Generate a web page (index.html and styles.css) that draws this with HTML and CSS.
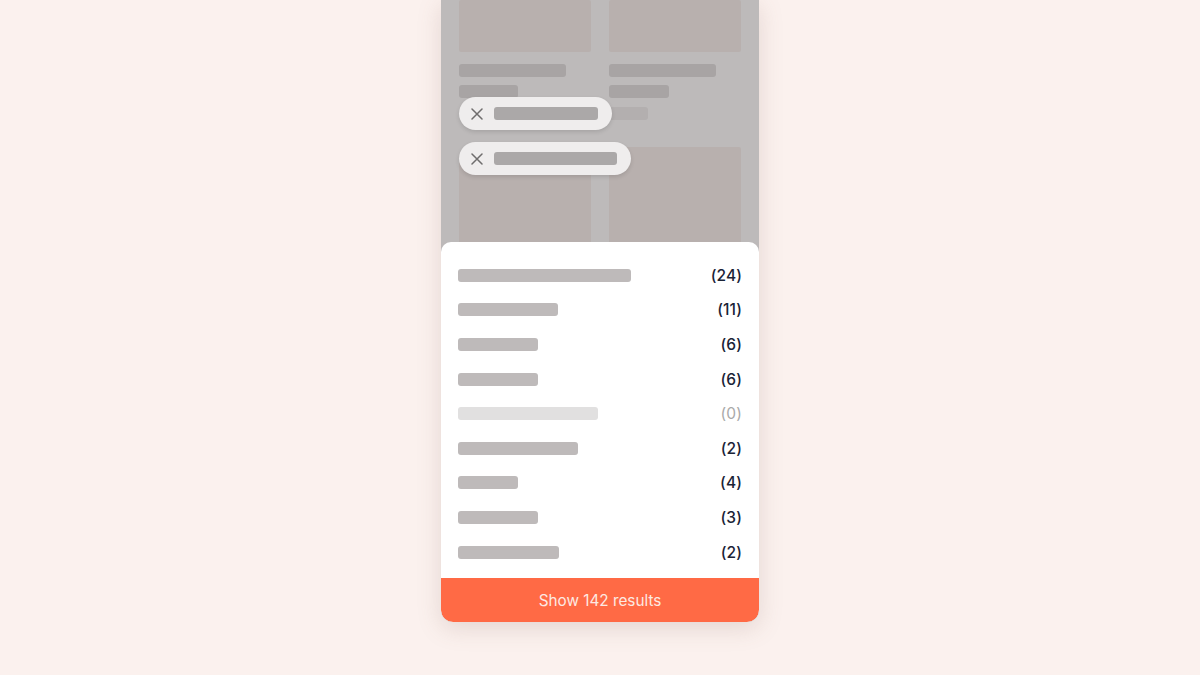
FILE: index.html
```html
<!DOCTYPE html>
<html>
<head>
<meta charset="utf-8">
<link rel="stylesheet" href="styles.css">
</head>
<body>
<div class="stage">
  <div class="phone">
    <div class="backdrop">
      <div class="grid">
        <div class="col">
          <div class="card card-top"></div>
          <div class="line w107"></div>
          <div class="line w59 mt8"></div>
        </div>
        <div class="col">
          <div class="card card-top"></div>
          <div class="line w107"></div>
          <div class="line w60 mt8"></div>
          <div class="line w39 mt10 faint"></div>
        </div>
        <div class="card card-bottom"></div>
        <div class="card card-bottom"></div>
      </div>
      <div class="chips">
        <div class="chip">
          <svg class="x" width="12" height="12" viewBox="0 0 12 12"><path d="M1 1L11 11M11 1L1 11" stroke="#6f6d6d" stroke-width="1.5" stroke-linecap="round"/></svg>
          <span class="chip-bar w104"></span>
        </div>
        <div class="chip">
          <svg class="x" width="12" height="12" viewBox="0 0 12 12"><path d="M1 1L11 11M11 1L1 11" stroke="#6f6d6d" stroke-width="1.5" stroke-linecap="round"/></svg>
          <span class="chip-bar w123"></span>
        </div>
      </div>
    </div>
    <div class="sheet">
      <ul class="list">
        <li class="row"><span class="bar" style="width:173px"></span><span class="count">(24)</span></li>
        <li class="row"><span class="bar" style="width:100px"></span><span class="count">(11)</span></li>
        <li class="row"><span class="bar" style="width:80px"></span><span class="count">(6)</span></li>
        <li class="row"><span class="bar" style="width:80px"></span><span class="count">(6)</span></li>
        <li class="row disabled"><span class="bar" style="width:140px"></span><span class="count">(0)</span></li>
        <li class="row"><span class="bar" style="width:120px"></span><span class="count">(2)</span></li>
        <li class="row"><span class="bar" style="width:60px"></span><span class="count">(4)</span></li>
        <li class="row"><span class="bar" style="width:80px"></span><span class="count">(3)</span></li>
        <li class="row"><span class="bar" style="width:101px"></span><span class="count">(2)</span></li>
      </ul>
      <button class="cta">Show 142 results</button>
    </div>
  </div>
</div>
</body>
</html>
```

FILE: styles.css
```css
* { box-sizing: border-box; }
html, body { margin: 0; padding: 0; }
body {
  background: #fbf1ee;
  font-family: Inter, "Noto Sans", sans-serif;
  width: 1200px;
  height: 675px;
  overflow: hidden;
}
.stage {
  display: flex;
  justify-content: center;
}
.phone {
  width: 318px;
  height: 622px;
  border-radius: 0 0 12px 12px;
  background: #bdb9b9;
  box-shadow: 0 6px 24px rgba(120, 90, 80, 0.18);
  display: flex;
  flex-direction: column;
  overflow: hidden;
}
.backdrop {
  position: relative;
  height: 242px;
  background: #bdbaba;
  padding: 0 18px;
  overflow: hidden;
}
.grid {
  display: grid;
  grid-template-columns: 132px 132px;
  column-gap: 18px;
  row-gap: 0;
}
.col { display: flex; flex-direction: column; }
.card { background: #b8b0ae; border-radius: 2px; }
.card-top { height: 52px; margin-bottom: 12px; }
.card-bottom { height: 120px; }
.line { height: 13px; border-radius: 3px; background: #a8a4a4; }
.faint { background: #b3afaf; }
.mt8 { margin-top: 8px; }
.mt10 { margin-top: 9px; }
.w107 { width: 107px; }
.w59 { width: 59px; }
.w60 { width: 60px; }
.w39 { width: 39px; }
.grid > .card-bottom:nth-child(3) { margin-top: 40px; }
.grid > .card-bottom:nth-child(4) { margin-top: 27px; }
.chips {
  position: absolute;
  left: 18px;
  top: 97px;
  display: flex;
  flex-direction: column;
  align-items: flex-start;
  gap: 12px;
}
.chip {
  height: 33px;
  border-radius: 17px;
  background: #efeded;
  box-shadow: 0 2px 4px rgba(0, 0, 0, 0.12);
  display: flex;
  align-items: center;
  padding: 0 14px 0 12px;
  gap: 11px;
}
.x { display: block; flex: none; }
.chip-bar { display: block; height: 13px; border-radius: 3px; background: #aba8a8; }
.w104 { width: 104px; }
.w123 { width: 123px; }
.sheet {
  flex: 1;
  background: #ffffff;
  border-radius: 10px 10px 12px 12px;
  display: flex;
  flex-direction: column;
  overflow: hidden;
}
.list {
  list-style: none;
  margin: 0;
  padding: 16px 17px 0 17px;
  flex: 1;
}
.row {
  height: 34.6px;
  display: flex;
  align-items: center;
  justify-content: space-between;
}
.bar {
  display: block;
  height: 13px;
  border-radius: 3px;
  background: #bebaba;
}
.count {
  font-size: 15.5px;
  font-weight: 500;
  color: #1a2336;
  letter-spacing: 0.1px;
}
.row.disabled .bar { background: #e1e0e0; }
.row.disabled .count { color: #a9a9a9; font-weight: 400; }
.cta {
  height: 44px;
  border: 0;
  margin: 0;
  width: 100%;
  background: #ff6a45;
  color: #fde9e2;
  font-family: Inter, "Noto Sans", sans-serif;
  font-size: 15.3px;
  font-weight: 400;
  border-radius: 0 0 12px 12px;
  padding: 0;
}
```
